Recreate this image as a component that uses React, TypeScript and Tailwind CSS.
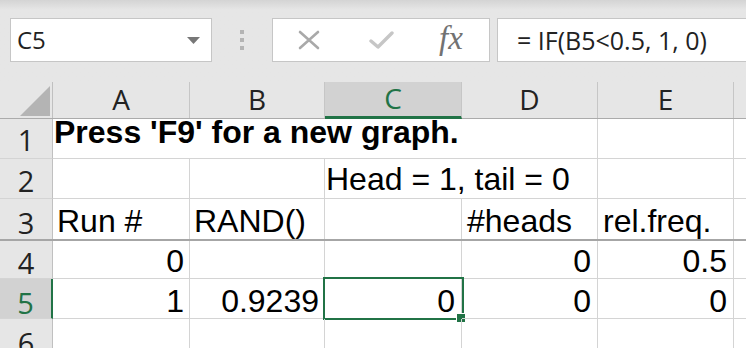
import React from 'react';

// column widths: A, B, C, D, E (F takes the rest)
const COLS = ['A', 'B', 'C', 'D', 'E'];

const NameBox = () => (
  <div className="ml-[10px] flex h-[44px] w-[202px] shrink-0 items-center justify-between border border-[#c6c6c6] bg-white pl-[6px] pr-[11px]">
    <span className="text-[24px] leading-none text-[#222]">C5</span>
    <svg width="13" height="7" viewBox="0 0 13 7">
      <polygon points="0,0 13,0 6.5,7" fill="#777" />
    </svg>
  </div>
);

const Grip = () => (
  <div className="ml-[28px] flex h-[44px] w-[4px] shrink-0 flex-col items-center justify-center gap-[4px]">
    <div className="h-[4px] w-[4px] bg-[#b4b4b4]" />
    <div className="h-[4px] w-[4px] bg-[#b4b4b4]" />
    <div className="h-[4px] w-[4px] bg-[#b4b4b4]" />
  </div>
);

const FormulaButtons = () => (
  <div className="ml-[28px] flex h-[44px] w-[218px] shrink-0 items-center border border-[#c6c6c6] bg-white pl-[25px]">
    <svg width="22" height="20" viewBox="0 0 22 20">
      <path d="M2 2 L20 18 M20 2 L2 18" stroke="#a9a9a9" strokeWidth="2.6" strokeLinecap="round" />
    </svg>
    <svg className="ml-[49px]" width="25" height="20" viewBox="0 0 25 20">
      <path d="M2 11 L9 17 L23 3" stroke="#c6c6c6" strokeWidth="3.4" fill="none" strokeLinecap="round" strokeLinejoin="round" />
    </svg>
    <span className="ml-[45px] -mt-[4px] font-['Liberation_Serif',serif] text-[33px] italic leading-none text-[#727272]">
      fx
    </span>
  </div>
);

const FormulaInput = () => (
  <div className="ml-[7px] flex h-[44px] w-[270px] shrink-0 items-center border border-[#c6c6c6] bg-white pl-[19px]">
    <span className="whitespace-nowrap text-[25px] leading-none text-[#222]">= IF(B5&lt;0.5, 1, 0)</span>
  </div>
);

type CellDef = {
  text?: string;
  w: string;
  align?: 'left' | 'right';
  bold?: boolean;
  pad?: string;
  selected?: boolean;
};

const Cell = ({ c, pb, bottom }: { c: CellDef; pb: string; bottom: boolean }) => (
  <div
    className={`relative flex h-full shrink-0 items-end border-r border-[#d4d4d4] ${bottom ? 'border-b' : ''} ${c.w} ${
      c.align === 'right' ? 'justify-end' : 'justify-start'
    } ${pb} ${c.pad ?? ''}`}
  >
    {c.text && (
      <span
        className={`whitespace-nowrap font-['Liberation_Sans',Arial,sans-serif] text-[32px] text-black ${
          c.bold ? 'font-bold leading-[26px]' : 'leading-none'
        }`}
      >
        {c.text}
      </span>
    )}
    {c.selected && (
      <>
        <div className="pointer-events-none absolute -left-[2px] -top-[2px] h-[43px] w-[141px] border-2 border-[#217346]" />
        <div className="absolute left-[131px] top-[34px] h-[10px] w-[10px] border border-white bg-[#217346]" />
      </>
    )}
  </div>
);

const RowHead = ({ n, pb, selected, bottom }: { n: number; pb: string; selected?: boolean; bottom: boolean }) => (
  <div
    className={`flex h-full w-[53px] shrink-0 items-end justify-center ${pb} ${bottom ? 'border-b border-b-[#d4d4d4]' : ''} ${
      selected ? 'border-r-2 border-r-[#217346] bg-[#d2d2d2] text-[#217346]' : 'border-r border-r-[#c0c0c0] bg-[#e6e6e6] text-[#222]'
    }`}
  >
    <span className="text-[29px] leading-none">{n}</span>
  </div>
);

const rows: { n: number; h: string; pb: string; headPb: string; bottom: boolean; cells: CellDef[] }[] = [
  {
    n: 1,
    h: 'h-[40px]',
    pb: 'pb-[13px]',
    headPb: 'pb-[4px]',
    bottom: true,
    cells: [
      { text: "Press 'F9' for a new graph.", w: 'w-[545px]', bold: true, pad: 'pl-[1px]' },
      { w: 'w-[136px]' },
    ],
  },
  {
    n: 2,
    h: 'h-[40px]',
    pb: 'pb-[3px]',
    headPb: 'pb-[3px]',
    bottom: true,
    cells: [
      { w: 'w-[137px]' },
      { w: 'w-[135px]' },
      { text: 'Head = 1, tail = 0', w: 'w-[273px]', pad: 'pl-[1px]' },
      { w: 'w-[136px]' },
    ],
  },
  {
    n: 3,
    h: 'h-[40px]',
    pb: 'pb-[2px]',
    headPb: 'pb-[2px]',
    bottom: false,
    cells: [
      { text: 'Run #', w: 'w-[137px]', pad: 'pl-[4px]' },
      { text: 'RAND()', w: 'w-[135px]', pad: 'pl-[4px]' },
      { w: 'w-[137px]' },
      { text: '#heads', w: 'w-[136px]', pad: 'pl-[5px]' },
      { text: 'rel.freq.', w: 'w-[136px]', pad: 'pl-[5px]' },
    ],
  },
  {
    n: 4,
    h: 'h-[38px]',
    pb: 'pb-[1px]',
    headPb: 'pb-[1px]',
    bottom: true,
    cells: [
      { text: '0', w: 'w-[137px]', align: 'right', pad: 'pr-[5px]' },
      { w: 'w-[135px]' },
      { w: 'w-[137px]' },
      { text: '0', w: 'w-[136px]', align: 'right', pad: 'pr-[6px]' },
      { text: '0.5', w: 'w-[136px]', align: 'right', pad: 'pr-[6px]' },
    ],
  },
  {
    n: 5,
    h: 'h-[40px]',
    pb: 'pb-[1px]',
    headPb: 'pb-[1px]',
    bottom: true,
    cells: [
      { text: '1', w: 'w-[137px]', align: 'right', pad: 'pr-[5px]' },
      { text: '0.9239', w: 'w-[135px]', align: 'right', pad: 'pr-[5px]' },
      { text: '0', w: 'w-[137px]', align: 'right', pad: 'pr-[6px]', selected: true },
      { text: '0', w: 'w-[136px]', align: 'right', pad: 'pr-[6px]' },
      { text: '0', w: 'w-[136px]', align: 'right', pad: 'pr-[6px]' },
    ],
  },
  {
    n: 6,
    h: 'h-[40px]',
    pb: 'pb-[1px]',
    headPb: 'pb-[1px]',
    bottom: true,
    cells: [
      { w: 'w-[137px]' },
      { w: 'w-[135px]' },
      { w: 'w-[137px]' },
      { w: 'w-[136px]' },
      { w: 'w-[136px]' },
    ],
  },
];

const colWidth: Record<string, string> = {
  A: 'w-[137px]',
  B: 'w-[135px]',
  C: 'w-[137px]',
  D: 'w-[136px]',
  E: 'w-[136px]',
};

export default function App() {
  return (
    <div className="h-[348px] w-[746px] overflow-hidden bg-[#e6e6e6] font-['Open_Sans','Noto_Sans',sans-serif]">
      {/* Formula bar */}
      <div className="flex h-[82px] items-start bg-linear-to-b from-[#d4d4d4] from-0% to-[#e6e6e6] to-[12%] pt-[18px]">
        <NameBox />
        <Grip />
        <FormulaButtons />
        <FormulaInput />
      </div>

      {/* Column headers */}
      <div className="flex h-[37px] border-b border-[#ababab] bg-[#e6e6e6]">
        <div className="relative w-[53px] shrink-0 border-r border-[#c0c0c0]">
          <svg className="absolute left-[20px] top-[4px]" width="30" height="30" viewBox="0 0 30 30">
            <polygon points="30,0 30,30 0,30" fill="#b4b4b4" />
          </svg>
        </div>
        {COLS.map((c) => (
          <div
            key={c}
            className={`flex shrink-0 items-center justify-center border-r border-[#c6c6c6] text-[28px] leading-none ${colWidth[c]} ${
              c === 'C' ? '-mb-px border-b-[3px] border-b-[#217346] bg-[#d2d2d2] text-[#217346]' : 'text-[#222]'
            }`}
          >
            <span className="-mt-[2px]">{c}</span>
          </div>
        ))}
        <div className="flex-1" />
      </div>

      {/* Sheet rows */}
      <div className="bg-white">
        {rows.map((r) => (
          <React.Fragment key={r.n}>
            <div className={`flex ${r.h}`}>
              <RowHead n={r.n} pb={r.headPb} selected={r.n === 5} bottom={r.bottom} />
              {r.cells.map((c, i) => (
                <Cell key={i} c={c} pb={r.pb} bottom={r.bottom} />
              ))}
              <div className={`h-full flex-1 ${r.bottom ? 'border-b border-[#d4d4d4]' : ''}`} />
            </div>
            {r.n === 3 && <div className="h-[2px] bg-[#a6a6a6]" />}
          </React.Fragment>
        ))}
      </div>
    </div>
  );
}
